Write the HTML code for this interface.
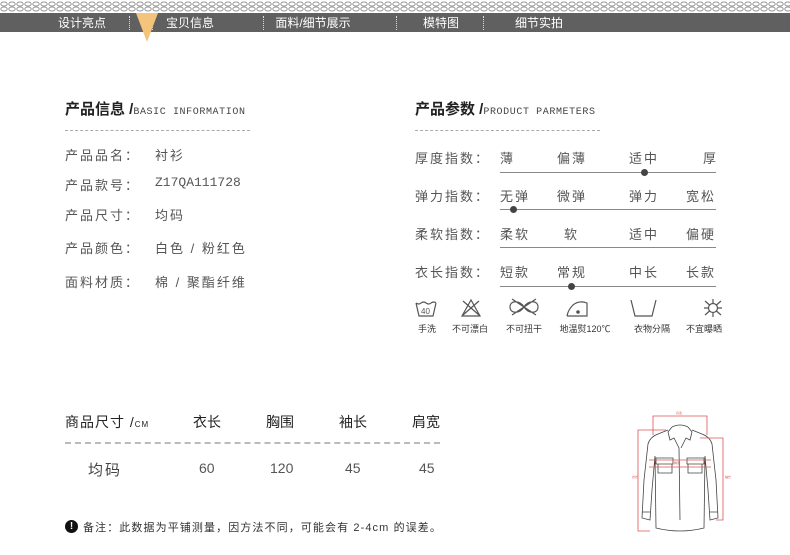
<!DOCTYPE html>
<html><head><meta charset="utf-8"><style>
*{margin:0;padding:0;box-sizing:border-box}
body{width:790px;height:555px;background:#fff;position:relative;overflow:hidden;font-family:"Liberation Sans","Noto Sans CJK SC",sans-serif;color:#444}
.a{position:absolute;white-space:nowrap}
.nav{position:absolute;left:0;top:13px;width:790px;height:19px;background:#606060}
.nav span{position:absolute;top:1px;color:#fff;font-size:12px;transform:translateX(-50%)}
.sep{position:absolute;top:3px;height:14px;border-left:1px dotted #ddd}
.t{font-size:15px;color:#222;font-weight:bold}
.t small{font-size:10px;font-weight:normal;color:#444;font-family:"Liberation Mono",monospace;letter-spacing:0.6px}
.dash{position:absolute;height:0;border-top:1px dashed #aaa}
.r{font-size:13px;color:#555;letter-spacing:2px}
.ln{position:absolute;height:1px;background:#888;left:500px;width:216px}
.dot{position:absolute;width:7px;height:7px;border-radius:50%;background:#444}
.il{font-size:9px;color:#333;transform:translateX(-50%)}
</style></head><body>
<svg class="a" style="left:0;top:0" width="790" height="13"><defs><pattern id="c" width="8" height="13" patternUnits="userSpaceOnUse"><ellipse cx="4" cy="4" rx="3.2" ry="2" fill="none" stroke="#999" stroke-width="1"/><ellipse cx="4" cy="9" rx="3.2" ry="2" fill="none" stroke="#999" stroke-width="1"/></pattern></defs><rect width="790" height="13" fill="url(#c)"/></svg>
<div class="nav">
<span style="left:82px">设计亮点</span>
<span style="left:190px">宝贝信息</span>
<span style="left:313px">面料/细节展示</span>
<span style="left:441px">模特图</span>
<span style="left:539px">细节实拍</span>
<div class="sep" style="left:129px"></div><div class="sep" style="left:152px"></div><div class="sep" style="left:263px"></div><div class="sep" style="left:396px"></div><div class="sep" style="left:483px"></div>
</div>
<svg class="a" style="left:136px;top:13px" width="22" height="30"><polygon points="0,0 22,0 11,29" fill="#f3c47a"/></svg>

<div class="a t" style="left:65px;top:98px">产品信息 /<small>BASIC INFORMATION</small></div>
<div class="dash" style="left:65px;top:130px;width:185px"></div>
<div class="a r" style="left:65px;top:145px">产品品名：</div><div class="a r" style="left:155px;top:145px">衬衫</div>
<div class="a r" style="left:65px;top:175px">产品款号：</div><div class="a r" style="left:155px;top:175px;font-family:'Liberation Mono',monospace;letter-spacing:0">Z17QA111728</div>
<div class="a r" style="left:65px;top:205px">产品尺寸：</div><div class="a r" style="left:155px;top:205px">均码</div>
<div class="a r" style="left:65px;top:238px">产品颜色：</div><div class="a r" style="left:155px;top:238px">白色 / 粉红色</div>
<div class="a r" style="left:65px;top:272px">面料材质：</div><div class="a r" style="left:155px;top:272px">棉 / 聚酯纤维</div>

<div class="a t" style="left:415px;top:98px">产品参数 /<small>PRODUCT PARMETERS</small></div>
<div class="dash" style="left:415px;top:130px;width:185px"></div>

<div class="a r" style="left:415px;top:148px">厚度指数：</div>
<div class="a r" style="left:500px;top:148px">薄</div><div class="a r" style="left:557px;top:148px">偏薄</div><div class="a r" style="left:629px;top:148px">适中</div><div class="a r" style="left:703px;top:148px">厚</div>
<div class="ln" style="top:172px"></div><div class="dot" style="left:641px;top:169px"></div>

<div class="a r" style="left:415px;top:186px">弹力指数：</div>
<div class="a r" style="left:500px;top:186px">无弹</div><div class="a r" style="left:557px;top:186px">微弹</div><div class="a r" style="left:629px;top:186px">弹力</div><div class="a r" style="left:686px;top:186px">宽松</div>
<div class="ln" style="top:209px"></div><div class="dot" style="left:510px;top:206px"></div>

<div class="a r" style="left:415px;top:224px">柔软指数：</div>
<div class="a r" style="left:500px;top:224px">柔软</div><div class="a r" style="left:564px;top:224px">软</div><div class="a r" style="left:629px;top:224px">适中</div><div class="a r" style="left:686px;top:224px">偏硬</div>
<div class="ln" style="top:247px"></div>

<div class="a r" style="left:415px;top:262px">衣长指数：</div>
<div class="a r" style="left:500px;top:262px">短款</div><div class="a r" style="left:557px;top:262px">常规</div><div class="a r" style="left:629px;top:262px">中长</div><div class="a r" style="left:686px;top:262px">长款</div>
<div class="ln" style="top:286px"></div><div class="dot" style="left:568px;top:283px"></div>

<svg class="a" style="left:410px;top:295px" width="330" height="25" fill="none" stroke="#555" stroke-width="1.2">
<path d="M6 8 L9 21 H23 L26 8 M6 8 q3 2 5 0 q3 -2 5 0 q3 2 5 0 q3 -2 5 0"/><text x="11" y="19" font-size="8" fill="#555" stroke="none">40</text>
<path d="M52 21 L61 5 L70 21 Z M53 6 L69 20 M69 6 L53 20"/>
<path d="M100 12 c0-7 10-7 14 0 c4 7 14 7 14 0 c0-7 -10-7 -14 0 c-4 7 -14 7 -14 0 Z M102 4 L126 20 M126 4 L102 20"/>
<path d="M157 21 H177 V8 q-8 -3 -14 2 q-5 5 -6 11"/><circle cx="168" cy="17" r="1.2" fill="#555"/>
<path d="M221 5 L225 21 H242 L246 5"/>
<path d="M295 6 L311 20 M311 6 L295 20 M303 4 V22 M294 13 H312"/><circle cx="303" cy="13" r="4.5" fill="#fff"/>
</svg>
<div class="a il" style="left:427px;top:322px">手洗</div>
<div class="a il" style="left:470px;top:322px">不可漂白</div>
<div class="a il" style="left:524px;top:322px">不可扭干</div>
<div class="a il" style="left:585px;top:322px">地温熨120℃</div>
<div class="a il" style="left:652px;top:322px">衣物分隔</div>
<div class="a il" style="left:704px;top:322px">不宜曝晒</div>

<div class="a" style="left:65px;top:412px;font-size:14px;color:#222;letter-spacing:1px">商品尺寸 /<span style="font-size:8px">CM</span></div>
<div class="a" style="left:193px;top:412px;font-size:14px;color:#222">衣长</div>
<div class="a" style="left:266px;top:412px;font-size:14px;color:#222">胸围</div>
<div class="a" style="left:339px;top:412px;font-size:14px;color:#222">袖长</div>
<div class="a" style="left:412px;top:412px;font-size:14px;color:#222">肩宽</div>
<div class="dash" style="left:65px;top:442px;width:375px;border-top:2px dashed #bbb"></div>
<div class="a" style="left:88px;top:459px;font-size:15px;color:#444;letter-spacing:2px">均码</div>
<div class="a" style="left:199px;top:460px;font-size:14px;color:#555">60</div>
<div class="a" style="left:270px;top:460px;font-size:14px;color:#555">120</div>
<div class="a" style="left:345px;top:460px;font-size:14px;color:#555">45</div>
<div class="a" style="left:419px;top:460px;font-size:14px;color:#555">45</div>
<div class="a" style="left:65px;top:520px;width:13px;height:13px;border-radius:50%;background:#111;color:#fff;font-size:10px;font-weight:bold;text-align:center;line-height:13px">!</div>
<div class="a" style="left:83px;top:519px;font-size:11px;color:#333;letter-spacing:1.1px">备注：此数据为平铺测量，因方法不同，可能会有 2-4cm 的误差。</div>

<svg class="a" style="left:620px;top:400px" width="120" height="140" fill="none" stroke-width="0.8">
<g stroke="#444">
<path d="M52 27 L48 32 L50 40 L54 38 L59 48 L60 120 M68 27 L72 32 L70 40 L66 38 L61 48"/>
<path d="M52 27 Q60 23 68 27"/>
<path d="M48 30 L38 34 Q30 37 28 44 L24 80 L22 118 L30 120 L32 90 L35 56 L36 128 Q60 134 84 128 L85 56 L88 90 L90 120 L98 118 L96 80 L92 44 Q90 37 82 34 L72 30"/>
<path d="M36 58 H53 V64 H36 Z M38 64 V73 H52 V64 M67 58 H84 V64 H67 Z M68 64 V73 H82 V64"/>
<path d="M22 112 H30 M90 112 H98"/>
</g>
<g stroke="#d55">
<path d="M33 21 V16 H87 V21 M33 16 V35 M87 16 V35"/>
<path d="M46 30 H18 V131 H30"/>
<path d="M80 38 H103 V120 H96"/>
<path d="M29 60 H91 M29 67 H91"/>
</g>
<g fill="#d55" stroke="none" font-size="3"><text x="56" y="14">肩宽</text><text x="54" y="64">胸围</text><text x="12" y="78">衣长</text><text x="105" y="78">袖长</text></g>
</svg>
</body></html>
